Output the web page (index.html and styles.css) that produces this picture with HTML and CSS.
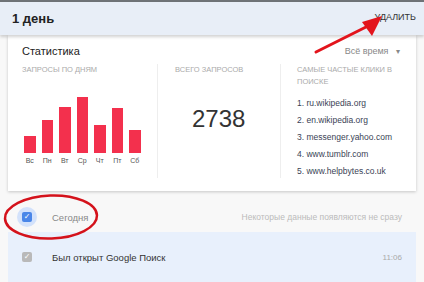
FILE: index.html
```html
<!DOCTYPE html>
<html lang="ru">
<head>
    <meta charset="UTF-8">
    <meta name="viewport" content="width=device-width, initial-scale=1.0">
    <title>Мои действия</title>
    <link rel="stylesheet" href="styles.css">
</head>
<body>

<div class="topline"></div>

<!-- шапка дня -->
<header class="day-bar">
    <span class="day-title">1 день</span>
    <span class="day-delete">УДАЛИТЬ</span>
</header>

<main class="content">
    <!-- карточка статистики -->
    <section class="card">
        <div class="card-head">
            <span class="card-title">Статистика</span>
            <span class="card-range">Всё время <span class="caret">▾</span></span>
        </div>
        <div class="stats">
            <div class="stat stat-days">
                <div class="stat-label">Запросы по дням</div>
                <div class="chart">
                    <div class="bars">
                        <div class="bar" style="height:17px"></div>
                        <div class="bar" style="height:33px"></div>
                        <div class="bar" style="height:46px"></div>
                        <div class="bar" style="height:56px"></div>
                        <div class="bar" style="height:28px"></div>
                        <div class="bar" style="height:45px"></div>
                        <div class="bar" style="height:23px"></div>
                    </div>
                    <div class="bar-labels">
                        <span>Вс</span><span>Пн</span><span>Вт</span><span>Ср</span><span>Чт</span><span>Пт</span><span>Сб</span>
                    </div>
                </div>
            </div>
            <div class="stat stat-total">
                <div class="stat-label">Всего запросов</div>
                <div class="total">2738</div>
            </div>
            <div class="stat stat-clicks">
                <div class="stat-label">Самые частые клики в поиске</div>
                <ol class="click-list">
                    <li>1. ru.wikipedia.org</li>
                    <li>2. en.wikipedia.org</li>
                    <li>3. messenger.yahoo.com</li>
                    <li>4. www.tumblr.com</li>
                    <li>5. www.helpbytes.co.uk</li>
                </ol>
            </div>
        </div>
    </section>

    <!-- сегодня -->
    <div class="today">
        <span class="check-ring"><span class="check check-blue">✓</span></span>
        <span class="today-label">Сегодня</span>
        <span class="today-note">Некоторые данные появляются не сразу</span>
    </div>

    <div class="entry">
        <span class="check check-gray">✓</span>
        <span class="entry-text">Был открыт Google Поиск</span>
        <span class="entry-time">11:06</span>
    </div>
</main>

<!-- пометки поверх скриншота -->
<svg class="mark mark-arrow" width="80" height="45" viewBox="0 0 80 45">
    <line x1="6" y1="40" x2="60" y2="13" stroke="#e3141c" stroke-width="3" stroke-linecap="round"/>
    <polygon points="72,4 52,10 62,24" fill="#e3141c"/>
</svg>
<svg class="mark mark-ellipse" width="104" height="54" viewBox="0 0 104 54">
    <ellipse cx="51" cy="26" rx="46" ry="21.5" fill="none" stroke="#d4121b" stroke-width="2.5" transform="rotate(-2 51 26)"/>
</svg>

</body>
</html>
```

FILE: styles.css
```css
body {
    margin: 0;
    font-family: "Liberation Sans", Arial, sans-serif;
    background-color: #f8f8f8;
    position: relative;
    overflow: hidden;
    height: 282px;
}
.topline {
    height: 2px;
    background-color: #6f7377;
}
.day-bar {
    position: relative;
    z-index: 1;
    height: 33px;
    padding: 0 8px 0 12px;
    display: flex;
    align-items: center;
    justify-content: space-between;
    background-color: #e8eef7;
    box-shadow: 0 2px 3px rgba(0, 0, 0, 0.18);
}
.day-title {
    font-size: 13px;
    font-weight: bold;
    color: #222;
}
.day-delete {
    font-size: 9px;
    color: #333;
    margin-top: -4px;
}
.content {
    padding: 0 8px;
}
.card {
    background-color: #fff;
    padding: 9px 14px 13px;
    box-shadow: 0 1px 3px rgba(0, 0, 0, 0.2);
}
.card-head {
    display: flex;
    justify-content: space-between;
    align-items: center;
    height: 14px;
}
.card-title {
    font-size: 11px;
    color: #222;
}
.card-range {
    font-size: 9px;
    color: #888;
    margin-right: 2px;
}
.caret {
    font-size: 8px;
    margin-left: 5px;
}
.stats {
    display: flex;
    margin-top: 6px;
    height: 114px;
}
.stat-label {
    font-size: 7.5px;
    line-height: 12px;
    text-transform: uppercase;
    color: #aaa;
}
.stat-days {
    width: 135px;
}
.stat-total {
    width: 105px;
    border-left: 1px solid #eee;
    padding-left: 17px;
}
.stat-clicks {
    flex: 1;
    border-left: 1px solid #eee;
    padding-left: 16px;
}
.chart {
    margin-top: 14px;
    padding-left: 2px;
}
.bars {
    height: 63px;
    display: flex;
    align-items: flex-end;
    gap: 6px;
}
.bar {
    width: 11.5px;
    background-color: #f3304d;
}
.bar-labels {
    display: flex;
    gap: 6px;
    margin-top: 3px;
}
.bar-labels span {
    width: 11.5px;
    text-align: center;
    font-size: 7px;
    line-height: 10px;
    color: #555;
}
.total {
    margin-top: 29px;
    padding-left: 17px;
    font-size: 24px;
    line-height: 28px;
    color: #333;
}
.click-list {
    list-style: none;
    margin: 7px 0 0;
    padding: 0;
}
.click-list li {
    font-size: 8.5px;
    line-height: 17px;
    color: #3a3f55;
}
.today {
    margin-top: 11px;
    height: 30px;
    padding: 0 14px 0 9px;
    display: flex;
    align-items: center;
}
.check-ring {
    width: 20px;
    height: 20px;
    border-radius: 50%;
    background-color: #d3e2fb;
    display: flex;
    align-items: center;
    justify-content: center;
}
.check {
    width: 10px;
    height: 10px;
    border-radius: 2px;
    color: #fff;
    font-size: 8px;
    line-height: 10px;
    text-align: center;
    font-family: "DejaVu Sans", sans-serif;
}
.check-blue {
    background-color: #4a86e8;
}
.check-gray {
    background-color: #b9b9b9;
}
.today-label {
    margin-left: 15px;
    font-size: 9.5px;
    color: #888;
}
.today-note {
    margin-left: auto;
    font-size: 8.5px;
    color: #bbb;
}
.entry {
    height: 50px;
    padding: 0 14px;
    display: flex;
    align-items: center;
    background-color: #e8f0fc;
}
.entry-text {
    margin-left: 20px;
    font-size: 9.5px;
    color: #333;
}
.entry-time {
    margin-left: auto;
    font-size: 8px;
    color: #aaa;
}
.mark {
    position: absolute;
    z-index: 2;
}
.mark-arrow {
    left: 310px;
    top: 12px;
}
.mark-ellipse {
    left: 0;
    top: 191px;
}
```
